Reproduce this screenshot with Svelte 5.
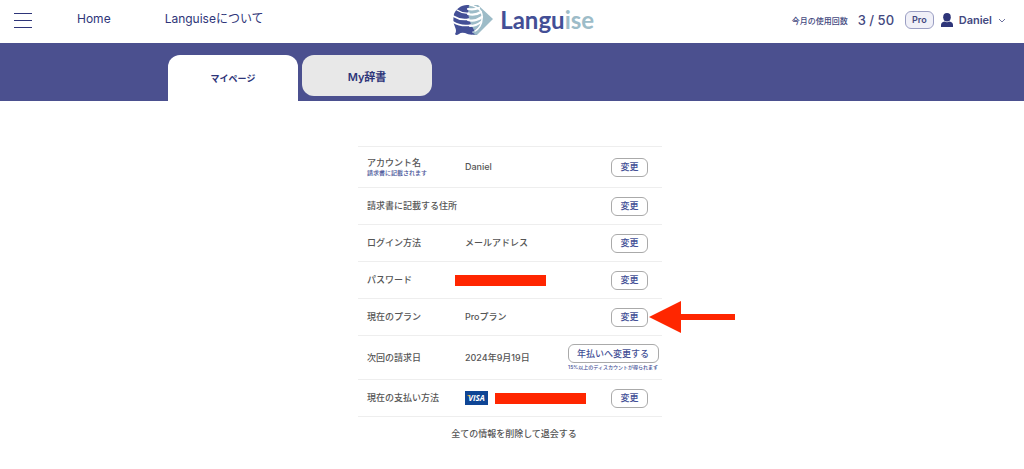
<script>
  const rows = [
    { label: 'アカウント名', note: '請求書に記載されます', value: 'Daniel', size: 'medium' },
    { label: '請求書に記載する住所' },
    { label: 'ログイン方法', value: 'メールアドレス' },
    { label: 'パスワード', redacted: true },
    { label: '現在のプラン', value: 'Proプラン', arrow: true },
    { label: '次回の請求日', value: '2024年9月19日', action: '年払いへ変更する', actionNote: '15%以上のディスカウントが得られます', size: 'tall' },
    { label: '現在の支払い方法', redacted: true, visa: true }
  ];
</script>

<header>
  <nav>
    <button class="menu" aria-label="メニュー"><span></span><span></span><span></span></button>
    <a class="home" href="#home">Home</a>
    <a href="#about">Languiseについて</a>
  </nav>
  <a class="logo" href="#top" aria-label="Languise">
    <svg width="42" height="32" viewBox="0 0 42 32" aria-hidden="true">
      <path d="M21 1H25L40 15L24 31H20Z" fill="#9dbcc8" />
      <path d="M14 1C21 0 27 6 27 14C27 21 24 26 19 28Q22 31 24 30Q17 32 12 29Q8 28 6 30Q3 32 2 30Q4 27 2 23C0 19 0 14 1 10C3 5 8 1 14 1Z" fill="#434f96" />
      <path d="M16 1C24 1 28 8 28 14C28 21 25 25 21 26Q13 13 16 1Z" fill="#9dbcc8" />
      <g fill="none" stroke="#fff" stroke-linecap="round">
        <path d="M17 1C26 3 30 8 29 15C29 20 26 25 22 27" stroke-width="1.5" />
        <path d="M4 6Q10 10 16 9" stroke-width="1.3" />
        <path d="M0 12Q8 17 16 15" stroke-width="1.5" />
        <path d="M0 18Q8 23 18 21" stroke-width="1.5" />
        <path d="M15 5Q21 6 26 4M15 10Q22 12 28 8M15 16Q22 18 29 13M17 22Q23 22 28 18" stroke-width="2.2" />
      </g>
    </svg>
    <span class="word">Langu<b>ise</b></span>
  </a>
  <div class="user">
    <span class="usage">今月の使用回数</span>
    <span class="count">3 / 50</span>
    <span class="plan">Pro</span>
    <button class="account">
      <svg width="12" height="14" viewBox="0 0 12 14" aria-hidden="true">
        <ellipse cx="6" cy="4.2" rx="3.8" ry="4.2" fill="#2e3579" />
        <path d="M0 14V12Q0 9 3.5 8.5Q6 10 8.5 8.5Q12 9 12 12V14Z" fill="#2e3579" />
      </svg>
      <span>Daniel</span>
      <svg width="8" height="5" viewBox="0 0 8 5" aria-hidden="true"><path d="M1 1L4 4L7 1" fill="none" stroke="#6e739f" /></svg>
    </button>
  </div>
</header>

<div class="band">
  <div class="tabs">
    <a class="tab active" href="#mypage">マイページ</a>
    <a class="tab" href="#dictionary">My辞書</a>
  </div>
</div>

<main>
  <dl>
    {#each rows as row}
      <div class="row {row.size ?? ''}">
        <dt>{row.label}{#if row.note}<small>{row.note}</small>{/if}</dt>
        <dd class:masked={row.redacted && !row.visa}>
          {#if row.visa}
            <svg class="card" width="23" height="14" viewBox="0 0 23 14" role="img" aria-label="VISA">
              <rect width="23" height="14" fill="#0e4595" />
              <text x="11.5" y="10" text-anchor="middle" class="visa">VISA</text>
              <path d="M2 4H4.2L5 6.5Q4 5 2 4Z" fill="#f2ae14" />
            </svg>
          {/if}
          {#if row.redacted}<span class="redaction"></span>{:else}{row.value ?? ''}{/if}
        </dd>
        <dd class="action">
          <button class:wide={row.action}>{row.action ?? '変更'}</button>
          {#if row.actionNote}<small>{row.actionNote}</small>{/if}
          {#if row.arrow}
            <svg class="arrow" width="86" height="32" viewBox="0 0 86 32" aria-hidden="true"><path d="M0 16L32 0V13H86V19H32V32Z" fill="#ff2600" /></svg>
          {/if}
        </dd>
      </div>
    {/each}
  </dl>
  <a class="leave" href="#leave">全ての情報を削除して退会する</a>
</main>

<style>
  :global(body) {
    margin: 0;
    background: #fff;
    color: #555;
    font-family: Inter, "Noto Sans CJK JP", sans-serif;
    font-size: 9px;
    font-weight: 500;
  }
  a { color: #2e3579; text-decoration: none; }
  button { font: inherit; color: #434880; background: none; border: 0; padding: 0; }
  header {
    display: flex;
    align-items: center;
    justify-content: space-between;
    height: 43px;
    padding: 0 18px 3px 14px;
    box-sizing: border-box;
  }
  nav { display: flex; align-items: center; font-size: 12px; font-weight: 400; line-height: 16px; padding-bottom: 2px; }
  .menu { display: flex; flex-direction: column; gap: 6px; width: 18px; padding-top: 2px; }
  .menu span { height: 1px; background: #2e3579; }
  .home { margin: 0 54px 0 45px; }
  .logo { display: flex; align-items: center; gap: 5px; margin-right: 8px; }
  .word { font: 700 24px/32px Lato, sans-serif; color: #434f96; }
  .word b { font-weight: 700; color: #9dbcc8; }
  .user { display: flex; align-items: center; color: #434880; }
  .usage { font-size: 8px; margin-right: 10px; }
  .count { font-size: 13px; line-height: 16px; margin-right: 11px; }
  .plan {
    font-weight: 600;
    line-height: 16px;
    padding: 0 6px;
    margin-right: 7px;
    border: 1px solid #9a9ec3;
    border-radius: 6px;
    background: #f0f0f8;
  }
  .account { display: flex; align-items: center; gap: 6px; font-size: 11px; font-weight: 600; line-height: 16px; }
  .band { background: #4b508f; padding-top: 12px; }
  .tabs { display: flex; gap: 4px; max-width: 688px; margin: 0 auto; }
  .tab {
    width: 130px;
    height: 41px;
    margin-bottom: 5px;
    display: flex;
    align-items: center;
    justify-content: center;
    box-sizing: border-box;
    border-radius: 12px;
    background: #e8e8e8;
    font-size: 11px;
    font-weight: 600;
  }
  .tab.active { height: 46px; margin: 0; border-radius: 12px 12px 0 0; background: #fff; font-size: 9px; }
  main { padding: 45px 4px 24px 0; text-align: center; }
  dl { width: 304px; margin: 0 auto; text-align: left; border-top: 1px solid #eee; }
  .row {
    display: grid;
    grid-template-columns: 98px minmax(0, 1fr) 92px;
    align-items: center;
    min-height: 37px;
    padding: 0 3px 0 9px;
    box-sizing: border-box;
    border-bottom: 1px solid #eee;
    line-height: 12px;
  }
  .medium { min-height: 41px; }
  .tall { min-height: 44px; }
  dt { white-space: nowrap; }
  dd { margin: 0; display: flex; align-items: center; gap: 7px; white-space: nowrap; }
  .masked { margin-left: -10px; }
  small { display: block; font-size: 6px; line-height: 8px; color: #434f96; }
  .card { flex: none; }
  .redaction { width: 91px; height: 11px; flex: none; background: #ff2600; }
  .visa { font: italic 700 8px "Open Sans", sans-serif; fill: #fff; }
  .action { position: relative; flex-direction: column; align-items: flex-start; gap: 0; padding-left: 44px; }
  .tall .action { align-items: center; padding-left: 0; }
  .action button {
    width: 37px;
    height: 19px;
    box-sizing: border-box;
    border: 1px solid #aaa;
    border-radius: 6px;
    color: #434f96;
  }
  .action .wide { width: 91px; }
  .action small { font-size: 5px; }
  .arrow { position: absolute; left: 82px; top: 50%; transform: translateY(-50%); }
  .leave { display: inline-block; margin-top: 10px; padding-left: 8px; color: #555; line-height: 14px; }
</style>
